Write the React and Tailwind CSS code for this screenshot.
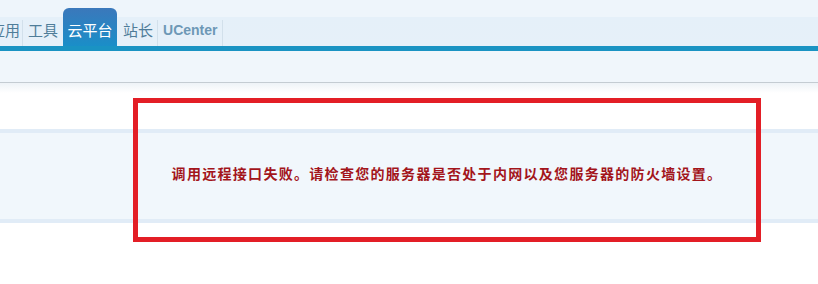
import React from "react";

const cjk = { fontFamily: '"Noto Sans CJK SC", "Microsoft YaHei", sans-serif' };

export default function App() {
  return (
    <div className="relative w-[818px] h-[284px] overflow-hidden bg-white" style={cjk}>
      {/* header nav */}
      <div className="h-[46px] flex items-end bg-[linear-gradient(#eef5fb_0,#eef5fb_17px,#e5f0f9_17px,#e6f0f9_100%)]">
        <div className="-ml-[10px] h-[26px] pr-[2px] border-r border-[#d2e0eb] text-[15px] leading-[20px] text-[#4f7d99]">应用</div>
        <div className="h-[26px] pl-[5px] pr-[5px] text-[15px] leading-[20px] text-[#4f7d99]">工具</div>
        <div className="h-[38px] w-[54px] pt-[12px] text-center rounded-t-[6px] bg-[linear-gradient(#3b78bb,#1a8ec8)] text-[15px] leading-[20px] text-white">云平台</div>
        <div className="h-[26px] pl-[6px] pr-[4px] border-r border-[#d2e0eb] text-[15px] leading-[20px] text-[#4f7d99]">站长</div>
        <div
          className="h-[26px] pl-[5px] pr-[4px] border-r border-[#d2e0eb] text-[14px] leading-[20px] font-bold text-[#6d98b6]"
          style={{ fontFamily: '"Liberation Sans", Arial, sans-serif' }}
        >
          UCenter
        </div>
      </div>
      {/* blue line */}
      <div className="h-[5px] bg-[#1a93c3]" />
      {/* sub band */}
      <div className="h-[32px] bg-[#f0f6fb] border-b border-[#c4ccd2]" />
      <div className="h-[10px] bg-[linear-gradient(#eef3f7,#ffffff)]" />
      <div className="h-[36px]" />
      {/* message row */}
      <div className="h-[94px] border-y-4 border-[#e1ecf7] bg-[#f1f7fc]">
        <div className="ml-[133px] w-[628px] pt-[27px] text-center">
          <span className="text-[14px] leading-[20px] font-bold tracking-[1.3px] text-[#a3151b]">
            调用远程接口失败。请检查您的服务器是否处于内网以及您服务器的防火墙设置。
          </span>
        </div>
      </div>
      {/* annotation box */}
      <div className="absolute left-[133px] top-[98px] w-[628px] h-[144px] border-[5px] border-[#e31e26]" />
    </div>
  );
}
